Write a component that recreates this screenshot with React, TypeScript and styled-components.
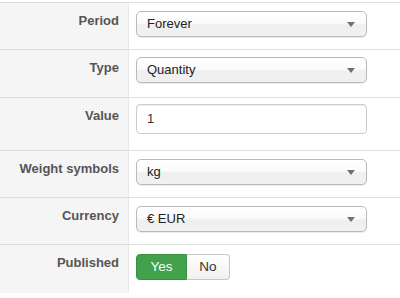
import React from "react";
import styled, { createGlobalStyle } from "styled-components";

const Global = createGlobalStyle`
  html, body { margin: 0; padding: 0; background: #fff; }
  body { font-family: "Liberation Sans", Arial, Helvetica, sans-serif; font-size: 13px; color: #333; }
`;

const Table = styled.div`
  padding-top: 2px;
  width: 400px;
  display: grid;
  grid-template-columns: 129px 1fr;
`;

const LabelCell = styled.div<{ $h: number }>`
  height: ${(p) => p.$h}px;
  box-sizing: border-box;
  border-top: 1px solid #dedede;
  border-right: 1px solid #e8e8e8;
  background: #f5f5f5;
  padding: 9px 9px 0 0;
  text-align: right;
  font-weight: bold;
  font-size: 13px;
  line-height: 18px;
  color: #555;
`;

const FieldCell = styled.div<{ $h: number; $pt: number }>`
  height: ${(p) => p.$h}px;
  box-sizing: border-box;
  border-top: 1px solid #dedede;
  padding: ${(p) => p.$pt}px 0 0 7px;
`;

const Select = styled.div`
  position: relative;
  box-sizing: border-box;
  width: 231px;
  height: 26px;
  border: 1px solid #b9b9b9;
  border-radius: 5px;
  background: linear-gradient(#ffffff 0%, #fbfbfb 45%, #efefef 55%, #f1f1f1 100%);
  box-shadow: 0 1px 1px rgba(0, 0, 0, 0.08);
  padding-left: 10px;
  line-height: 24px;
  font-size: 13px;
  color: #222;
`;

const Arrow = styled.svg`
  position: absolute;
  right: 11px;
  top: 10px;
`;

const Input = styled.div`
  box-sizing: border-box;
  width: 231px;
  height: 30px;
  border: 1px solid #cccccc;
  border-radius: 4px;
  background: #fff;
  box-shadow: inset 0 1px 1px rgba(0, 0, 0, 0.075);
  padding-left: 10px;
  line-height: 28px;
  font-size: 13px;
  color: #333;
`;

const BtnGroup = styled.div`
  display: flex;
`;

const Btn = styled.div<{ $active?: boolean; $w: number }>`
  box-sizing: border-box;
  width: ${(p) => p.$w}px;
  height: 26px;
  line-height: 24px;
  text-align: center;
  font-size: 13.5px;
  border: 1px solid ${(p) => (p.$active ? "#3a8e44" : "#c8c8c8")};
  color: ${(p) => (p.$active ? "#fff" : "#333")};
  background: ${(p) =>
    p.$active ? "#42a24c" : "linear-gradient(#ffffff, #f0f0f0)"};
  border-radius: ${(p) => (p.$active ? "4px 0 0 4px" : "0 4px 4px 0")};
  ${(p) => (p.$active ? "" : "border-left: none;")}
`;

const SelectBox = ({ value }: { value: string }) => (
  <Select>
    {value}
    <Arrow width="8" height="5" viewBox="0 0 8 5">
      <path d="M0 0 H8 L4 5 Z" fill="#707070" />
    </Arrow>
  </Select>
);

export default function App() {
  return (
    <>
      <Global />
      <Table>
        <LabelCell $h={47}>Period</LabelCell>
        <FieldCell $h={47} $pt={8}>
          <SelectBox value="Forever" />
        </FieldCell>

        <LabelCell $h={48}>Type</LabelCell>
        <FieldCell $h={48} $pt={7}>
          <SelectBox value="Quantity" />
        </FieldCell>

        <LabelCell $h={53}>Value</LabelCell>
        <FieldCell $h={53} $pt={6}>
          <Input>1</Input>
        </FieldCell>

        <LabelCell $h={47}>Weight symbols</LabelCell>
        <FieldCell $h={47} $pt={8}>
          <SelectBox value="kg" />
        </FieldCell>

        <LabelCell $h={47}>Currency</LabelCell>
        <FieldCell $h={47} $pt={8}>
          <SelectBox value="€ EUR" />
        </FieldCell>

        <LabelCell $h={49}>Published</LabelCell>
        <FieldCell $h={49} $pt={9}>
          <BtnGroup>
            <Btn $active $w={51}>Yes</Btn>
            <Btn $w={43}>No</Btn>
          </BtnGroup>
        </FieldCell>
      </Table>
    </>
  );
}
